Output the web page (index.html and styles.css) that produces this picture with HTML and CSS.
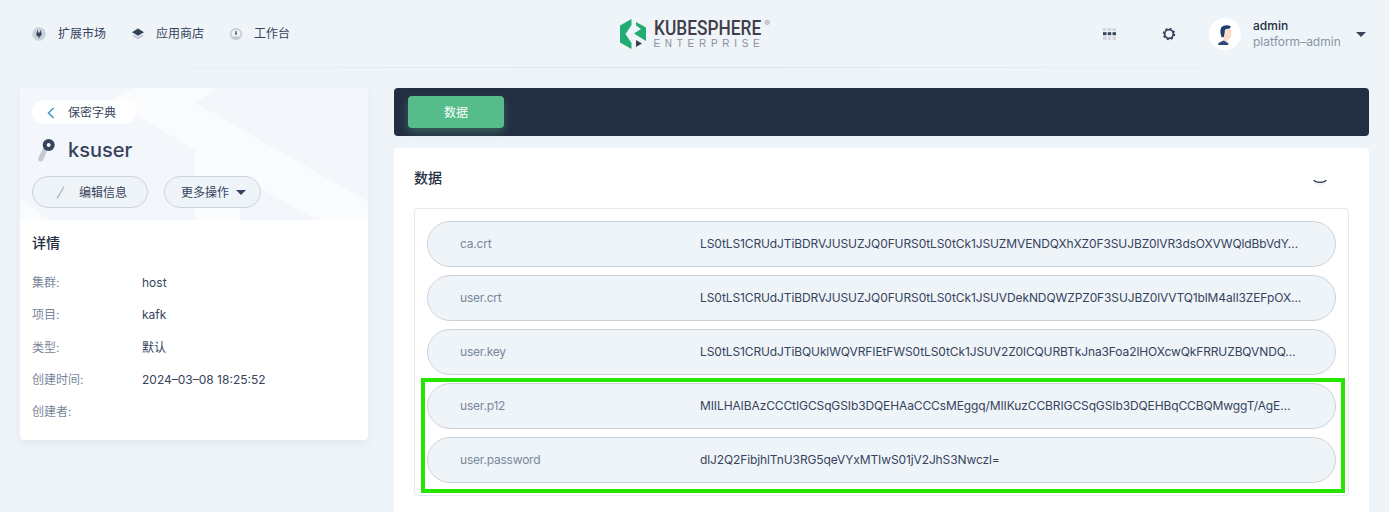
FILE: index.html
```html
<!DOCTYPE html>
<html lang="zh">
<head>
<meta charset="utf-8">
<title>ksuser</title>
<link rel="stylesheet" href="styles.css">
</head>
<body>
<header class="topbar">
  <nav class="nav">
    <a class="nav-item">
      <svg class="nav-icon" viewBox="0 0 14 14"><circle cx="7" cy="7" r="6.800" fill="#c9d1da"/><path d="M5 3.600h.9v2h2.200v-2H9v2h.6v1.800A2.400 2.400 0 0 1 7.500 9.600V11h-1V9.600a2.400 2.400 0 0 1-2.100-2.200V5.600H5z" fill="#36435c"/></svg>
      <span>扩展市场</span>
    </a>
    <a class="nav-item">
      <svg class="nav-icon" viewBox="0 0 14 14"><path d="M2 8.800l2-1.100L8 9.800l4-2.100 2 1.100-6 3.500z" fill="#c1c9d1"/><path d="M2 5.200L8 1.500l6 3.700-6 3.500z" fill="#36435c"/></svg>
      <span>应用商店</span>
    </a>
    <a class="nav-item">
      <svg class="nav-icon" viewBox="0 0 14 14"><circle cx="8" cy="7" r="6" fill="#c1c9d1"/><path d="M3.400 7a4.600 4.600 0 0 1 9.200 0c0 1-.3 1.800-.8 2.500H4.200A4.600 4.600 0 0 1 3.400 7z" fill="#eff4f9"/><path d="M7.600 3.800h.8l.4 3.300a.8.8 0 1 1-1.600 0z" fill="#36435c"/></svg>
      <span>工作台</span>
    </a>
  </nav>
  <div class="logo">
    <svg class="logo-mark" viewBox="0 0 26 30">
      <path d="M11.500 0L0 6.500v17L11.500 30v-6l-6-9 6-9z" fill="#22ab73"/>
      <path d="M16 3l10 5.500V22l-12-7.500L21 10l-5-3.500z" fill="#22ab73"/>
      <path d="M16 21l6 3.500-6 3.500z" fill="#3f3e4a"/>
    </svg>
    <div class="logo-text">
      <div class="logo-name"><span class="logo-word">KUBESPHERE</span><span class="logo-reg">®</span></div>
      <div class="logo-sub">ENTERPRISE</div>
    </div>
  </div>
  <div class="actions">
    <svg class="act-grid" viewBox="0 0 13 12">
      <g fill="#d1d7df"><rect x="0" y="0" width="3.500" height="3"/><rect x="4.750" y="0" width="3.500" height="3"/><rect x="9.500" y="0" width="3.500" height="3"/><rect x="0" y="8.500" width="3.500" height="3.500"/><rect x="4.750" y="8.500" width="3.500" height="3.500"/><rect x="9.500" y="8.500" width="3.500" height="3.500"/></g>
      <g fill="#36435c"><rect x="0" y="4.200" width="3.500" height="3"/><rect x="4.750" y="4.200" width="3.500" height="3"/><rect x="9.500" y="4.200" width="3.500" height="3"/></g>
    </svg>
    <svg class="act-gear" viewBox="0 0 14 14"><circle cx="7" cy="7" r="4.300" fill="none" stroke="#36435c" stroke-width="1.800"/><circle cx="7" cy="7" r="5.500" fill="none" stroke="#36435c" stroke-width="1.500" stroke-dasharray="2 2.320"/></svg>
    <div class="user">
      <span class="avatar">
        <svg viewBox="0 0 32 32" width="32" height="32"><path d="M14 11h8c.8 3 .6 7-.5 9-.7 1.200-2 1.500-3 1.300l.4 2.200h-4z" fill="#fbdccb"/><path d="M9.500 25l5-2.500 2 1 3 2-.3 1.500H9z" fill="#2d4a78"/><path d="M12.500 19c-1.200-3-1.500-7-.5-9 1.500-3 6.500-3.500 9.500-2 .5 1.500-.5 2.800-2 2.800-.8 0-3 .2-3.500 1-.6 1 .2 3-.6 3.500l-.5 3.700c-1 .3-2 .3-2.400 0z" fill="#1f3e70"/></svg>
      </span>
      <div class="user-text">
        <div class="user-name">admin</div>
        <div class="user-role">platform–admin</div>
      </div>
      <span class="caret"></span>
    </div>
  </div>
</header>

<main class="page">
  <aside class="side">
    <div class="side-head">
      <svg class="side-bg" viewBox="0 0 348 132" preserveAspectRatio="none"><path d="M113 0h87l-25 14.700L348 113.700V132h-51l-77-43v43h-45V62L113 25 93 12z" fill="#fafbfd"/><path d="M0 111l30 21H0z" fill="#fafbfd"/></svg>
      <a class="back">
        <svg class="back-icon" viewBox="0 0 8 12"><path d="M6.500 1L1.500 6l5 5" fill="none" stroke="#3d9ac0" stroke-width="1.500"/></svg>
        <span>保密字典</span>
      </a>
      <div class="title">
        <svg class="key" viewBox="0 0 18 24"><path d="M7.300 11L2.700 21" stroke="#c1c9d1" stroke-width="5" stroke-linecap="round"/><circle cx="10.700" cy="7" r="6" fill="#36435c"/><circle cx="10.700" cy="7" r="2" fill="#eff4f9"/></svg>
        <h1>ksuser</h1>
      </div>
      <div class="btns">
        <button class="btn btn-edit">
          <svg class="pen" viewBox="0 0 10 14"><path d="M8.600.8L2.400 11.500.8 13.200l.3-2.300L7.600.3z" fill="#a9b4c0"/></svg>
          <span>编辑信息</span>
        </button>
        <button class="btn btn-more"><span>更多操作</span><span class="caret"></span></button>
      </div>
    </div>
    <section class="details">
      <h2>详情</h2>
      <dl class="dl">
        <div class="dl-row"><dt>集群:</dt><dd>host</dd></div>
        <div class="dl-row"><dt>项目:</dt><dd>kafk</dd></div>
        <div class="dl-row"><dt>类型:</dt><dd>默认</dd></div>
        <div class="dl-row"><dt>创建时间:</dt><dd>2024–03–08 18:25:52</dd></div>
        <div class="dl-row"><dt>创建者:</dt><dd></dd></div>
      </dl>
    </section>
  </aside>

  <div class="content">
    <div class="tabs"><a class="tab">数据</a></div>
    <section class="card">
      <div class="card-head">
        <h3>数据</h3>
        <svg class="eye" viewBox="0 0 14 7"><path d="M.6 1.200C3 4 11 4 13.400 1.200" fill="none" stroke="#242e42" stroke-width="1.200"/><path d="M3 3.800l-.5 1M5.500 4.500l-.2 1M8.500 4.500l.2 1M11 3.800l.5 1" stroke="#8a94a3" stroke-width=".7"/></svg>
      </div>
      <div class="list">
        <div class="row"><span class="k">ca.crt</span><span class="v">LS0tLS1CRUdJTiBDRVJUSUZJQ0FURS0tLS0tCk1JSUZMVENDQXhXZ0F3SUJBZ0lVR3dsOXVWQldBbVdY…</span></div>
        <div class="row"><span class="k">user.crt</span><span class="v">LS0tLS1CRUdJTiBDRVJUSUZJQ0FURS0tLS0tCk1JSUVDekNDQWZPZ0F3SUJBZ0lVVTQ1blM4aIl3ZEFpOX…</span></div>
        <div class="row"><span class="k">user.key</span><span class="v">LS0tLS1CRUdJTiBQUklWQVRFIEtFWS0tLS0tCk1JSUV2Z0lCQURBTkJna3Foa2lHOXcwQkFRRUZBQVNDQ…</span></div>
        <div class="row"><span class="k">user.p12</span><span class="v">MIILHAIBAzCCCtIGCSqGSIb3DQEHAaCCCsMEggq/MIIKuzCCBRIGCSqGSIb3DQEHBqCCBQMwggT/AgE…</span></div>
        <div class="row"><span class="k">user.password</span><span class="v">dlJ2Q2FibjhlTnU3RG5qeVYxMTIwS01jV2JhS3Nwczl=</span></div>
        <div class="mark"></div>
      </div>
    </section>
  </div>
</main>
</body>
</html>
```
FILE: styles.css
```css
* { box-sizing: border-box; }
html, body { margin: 0; height: 100%; overflow: hidden; }
body {
  background: #eff4f9;
  color: #36435c;
  font: 12px/20px Inter, "Noto Sans CJK SC", sans-serif;
}
h1, h2, h3, dl, dd { margin: 0; }

.topbar {
  height: 68px;
  display: flex;
  align-items: center;
  padding: 1px 20px 0;
  border-bottom: 1px solid;
  border-image: linear-gradient(90deg, #eff4f9 0%, #dde3ea 50%, #eff4f9 100%) 1;
}
.nav { flex: 1; display: flex; gap: 24px; }
.nav-item { display: flex; align-items: center; gap: 12px; color: #36435c; }
.nav-item:first-child { margin-left: 12px; }
.nav-icon { width: 14px; height: 14px; }

.logo { display: flex; align-items: flex-start; gap: 8px; width: 150px; height: 32px; }
.logo-mark { width: 26px; height: 30px; margin-top: 1px; flex: none; }
.logo-text { width: 116px; }
.logo-name { display: flex; align-items: flex-start; height: 20px; }
.logo-word {
  font: 500 21px/21px Roboto, sans-serif;
  color: #3f3e4a;
  transform: scaleX(.824);
  transform-origin: left center;
  width: 111px;
  white-space: nowrap;
}
.logo-reg { font-size: 8px; line-height: 10px; color: #8a8f99; }
.logo-sub {
  font: 10px/10px "Liberation Sans", sans-serif;
  letter-spacing: 4.700px;
  color: #8a8f99;
  margin-top: 1px;
  white-space: nowrap;
}

.actions { flex: 1; display: flex; align-items: center; justify-content: flex-end; }
.act-grid { width: 13px; height: 12px; }
.act-gear { width: 14px; height: 14px; margin-left: 46px; }
.user { display: flex; align-items: center; margin: 0 3px 0 33px; }
.avatar {
  width: 32px; height: 32px; border-radius: 50%;
  background: #fff; display: block; overflow: hidden;
}
.avatar svg { display: block; }
.user-text { margin-left: 12px; width: 103px; line-height: 16px; }
.user-name { font-weight: 500; color: #242e42; }
.user-role { color: #8a96a8; }
.caret {
  display: inline-block;
  width: 0; height: 0;
  border-left: 5px solid transparent;
  border-right: 5px solid transparent;
  border-top: 5px solid #36435c;
}

.page { display: flex; gap: 26px; padding: 20px 20px 0; }
.side {
  width: 348px; height: 352px; flex: none;
  background: #fff; border-radius: 4px; overflow: hidden;
  box-shadow: 0 4px 8px rgba(36, 46, 66, .06);
}
.side-head {
  position: relative;
  height: 132px;
  padding: 12px 12px 0;
  background: #f3f6fb;
}
.side-bg { position: absolute; inset: 0; width: 100%; height: 100%; }
.back {
  position: relative;
  display: flex; align-items: center;
  width: 104px; height: 24px;
  border-radius: 12px;
  background: #fff;
  padding: 1px 0 0 15px;
  color: #36435c;
}
.back-icon { width: 8px; height: 12px; margin-right: 13px; }
.title { position: relative; display: flex; align-items: center; height: 24px; margin-top: 14px; padding-left: 6px; }
.key { width: 18px; height: 24px; margin-right: 12px; }
.title h1 { font-size: 20px; font-weight: 450; line-height: 24px; color: #36435c; }
.btns { position: relative; display: flex; gap: 16px; margin-top: 14px; }
.btn {
  height: 32px; border: 1px solid #ccd3db; border-radius: 16px;
  background: #eff4f9; color: #36435c;
  font: inherit;
  display: flex; align-items: center; padding: 1px 0 0;
}
.btn-edit { width: 116px; padding-left: 23px; }
.pen { width: 10px; height: 14px; margin-right: 13px; }
.btn-more { width: 97px; padding-left: 16px; gap: 7px; }

.details { padding: 13px 12px 0; }
.details h2 { font-size: 14px; font-weight: 500; line-height: 20px; color: #242e42; }
.dl { margin-top: 14px; }
.dl-row { display: flex; height: 32.250px; align-items: center; }
.dl-row dt { width: 110px; color: #79879c; }
.dl-row dd { color: #36435c; }

.content { flex: 1; min-width: 0; }
.tabs {
  height: 48px; padding: 8px 14px;
  background: #242e42; border-radius: 4px;
}
.tab {
  display: flex; align-items: center; justify-content: center;
  width: 96px; height: 32px; padding-top: 1px;
  background: #55bc8a; color: #fff; border-radius: 4px;
  box-shadow: 0 4px 8px rgba(85, 188, 138, .36);
}
.card {
  margin-top: 12px;
  background: #fff; border-radius: 4px;
  padding: 20px;
}
.card-head { display: flex; align-items: center; justify-content: space-between; height: 20px; padding-right: 22px; margin-bottom: 20px; }
.card-head h3 { font-size: 14px; font-weight: 500; line-height: 20px; color: #242e42; }
.eye { width: 14px; height: 7px; margin-top: 8px; }
.list {
  position: relative;
  display: flex; flex-direction: column; gap: 8px;
  border: 1px solid #e3e9ef; border-radius: 4px;
  padding: 12px;
}
.row {
  display: flex; align-items: center;
  height: 46px;
  padding-left: 32px;
  background: #eff4f9;
  border: 1px solid #ccd3db;
  border-radius: 23px;
}
.k { width: 240px; flex: none; color: #79879c; letter-spacing: -.2px; }
.v { color: #36435c; white-space: nowrap; letter-spacing: -.11px; }
.mark {
  position: absolute;
  left: 6px; right: 3px; top: 169px; bottom: 2px;
  border: 4px solid #26e600;
  pointer-events: none;
}
```
